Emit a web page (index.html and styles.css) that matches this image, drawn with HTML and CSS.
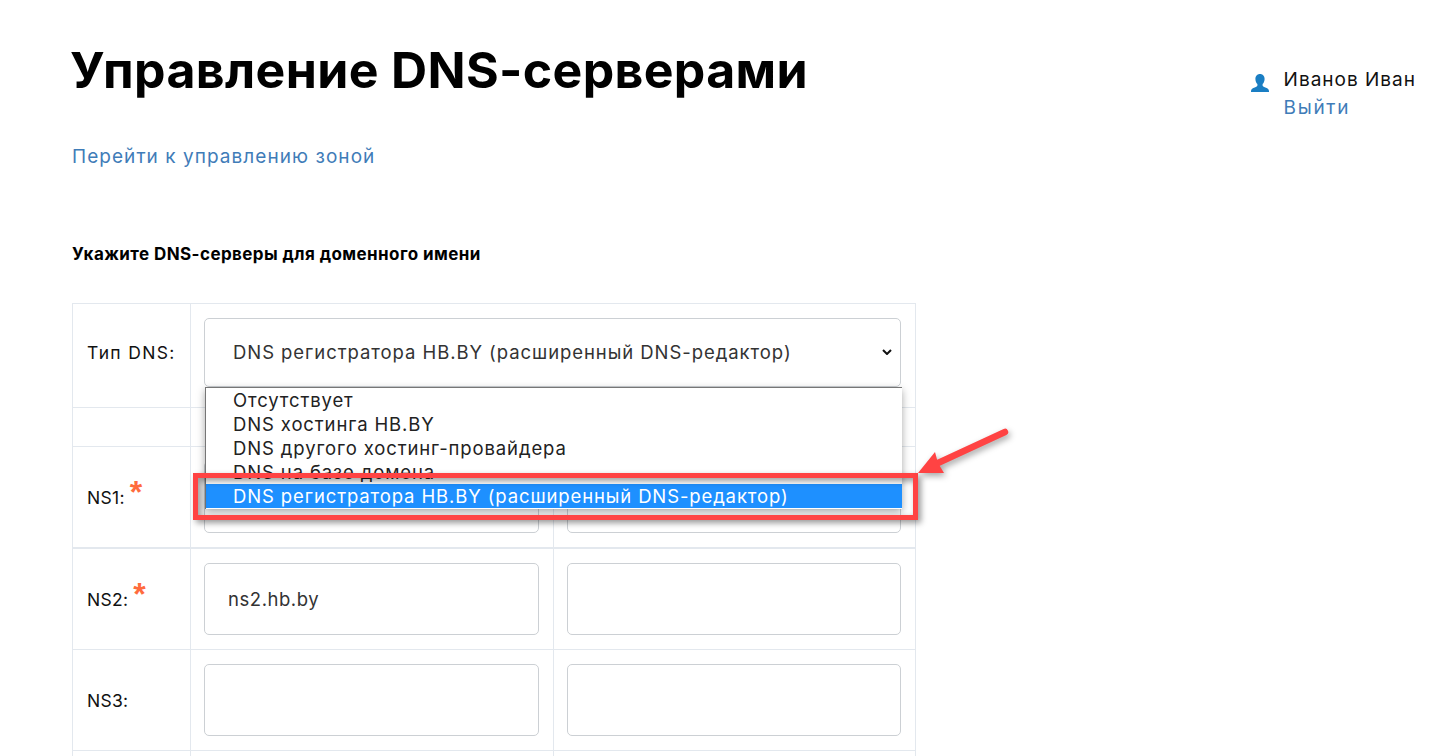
FILE: index.html
```html
<!DOCTYPE html>
<html lang="ru">
<head>
<meta charset="utf-8">
<title>Управление DNS-серверами</title>
<link rel="stylesheet" href="styles.css">
</head>
<body>
<div class="page">
  <header class="top">
    <div class="top-main">
      <h1 class="title">Управление DNS-серверами</h1>
      <a class="link zone-link" href="#">Перейти к управлению зоной</a>
    </div>
    <div class="user">
      <svg class="user-icon" viewBox="0 0 20 20" aria-hidden="true"><path d="M10 1c2.900 0 4.600 2.200 4.600 5 0 2.200-.9 4-2 5.100v1.500c0 .8 1 1.300 2.700 2 1.900.8 3.700 1.500 3.700 3.400v1H1v-1c0-1.900 1.800-2.600 3.700-3.400 1.700-.7 2.700-1.200 2.700-2v-1.500c-1.100-1.100-2-2.900-2-5.100C5.400 3.200 7.100 1 10 1z"/></svg>
      <div class="user-text">
        <div class="user-name">Иванов Иван</div>
        <a class="link logout" href="#">Выйти</a>
      </div>
    </div>
  </header>

  <h2 class="section">Укажите DNS-серверы для доменного имени</h2>

  <div class="form-wrap">
    <table class="dns">
      <colgroup><col class="c1"><col class="c2"><col class="c3"></colgroup>
      <tr class="row-type">
        <td class="lbl lbl-type">Тип DNS:</td>
        <td colspan="2">
          <select class="field select">
            <option>DNS регистратора HB.BY (расширенный DNS-редактор)</option>
          </select>
        </td>
      </tr>
      <tr class="row-gap"><td></td><td colspan="2"></td></tr>
      <tr class="row-ns thick">
        <td class="lbl">NS1:<span class="req">*</span></td>
        <td><input class="field" value="ns1.hb.by"></td>
        <td><input class="field"></td>
      </tr>
      <tr class="row-ns after-thick">
        <td class="lbl">NS2:<span class="req">*</span></td>
        <td><input class="field" value="ns2.hb.by"></td>
        <td><input class="field"></td>
      </tr>
      <tr class="row-ns">
        <td class="lbl">NS3:</td>
        <td><input class="field"></td>
        <td><input class="field"></td>
      </tr>
      <tr class="row-ns">
        <td class="lbl"></td>
        <td></td>
        <td></td>
      </tr>
    </table>

    <ul class="dropdown">
      <li>Отсутствует</li>
      <li>DNS хостинга HB.BY</li>
      <li>DNS другого хостинг-провайдера</li>
      <li>DNS на базе домена</li>
      <li class="selected">DNS регистратора HB.BY (расширенный DNS-редактор)</li>
    </ul>

    <div class="frame"></div>
    <svg class="arrow" viewBox="0 0 110 60" aria-hidden="true">
      <path class="arrow-line" d="M89 5 L22 36"/>
      <path class="arrow-head" d="M2 46 L19 25 L22 36 L28 46 Z"/>
    </svg>
  </div>
</div>
</body>
</html>
```
FILE: styles.css
```css
* { box-sizing: border-box; }
html, body { margin: 0; height: 756px; overflow: hidden; background: #fff; }
body { font-family: Inter, "Open Sans", "DejaVu Sans", sans-serif; color: #000; }
.page { padding: 40px 32px 0 72px; }

.top { display: flex; justify-content: space-between; align-items: flex-start; }
.title { margin: 0 0 0 -2px; font-size: 50px; line-height: 60px; font-weight: 700; letter-spacing: .35px; }
.link { color: #3f7cb8; text-decoration: none; font-size: 19px; letter-spacing: 1.05px; }
.zone-link { display: block; margin-top: 44px; line-height: 26px; }
.logout { letter-spacing: 1.7px; }

.user { display: flex; align-items: flex-start; gap: 14px; margin-top: 26px; }
.user-icon { width: 20px; height: 20px; margin-top: 7px; fill: #1a7ec3; }
.user-text { line-height: 28px; font-size: 19px; letter-spacing: 1px; }
.user-name { color: #111; }

.section { margin: 74px 0 0; font-size: 17px; line-height: 20px; font-weight: 700; letter-spacing: .42px; }

.form-wrap { position: relative; margin-top: 39px; width: 843px; }
.dns { border-collapse: collapse; table-layout: fixed; width: 843px; }
.c1 { width: 118px; }
.c2 { width: 363px; }
.c3 { width: 362px; }
.dns td { border: 1px solid #e3e8ee; padding: 14px 14px 14px 13px; vertical-align: middle; }
.lbl { font-size: 17.500px; letter-spacing: .3px; color: #111; padding-left: 14px !important; }
.lbl-type { letter-spacing: 1.35px; }
.row-type td { height: 104px; padding-bottom: 20px; padding-top: 13px; }
.row-gap td { height: 39px; padding: 0; }
.row-ns td { height: 100px; }
.thick td { border-bottom-width: 2px; }
.req { color: #ff6b3d; font-size: 32px; line-height: 0; font-weight: 700; font-family: "Liberation Sans", sans-serif; position: relative; top: -1px; margin-left: 5px; }

.field { display: block; width: 100%; height: 72px; padding: 0 23px; border: 1px solid #ccd0d4; border-radius: 5px; background: #fff; font: 18.500px Inter, "Open Sans", sans-serif; letter-spacing: .55px; color: #333; outline: 0; }
.select { height: 69px; padding-left: 28px; letter-spacing: .93px; appearance: none; background: #fff url("data:image/svg+xml,%3Csvg xmlns='http://www.w3.org/2000/svg' width='10' height='6'%3E%3Cpath d='M1 1l4 4 4-4' fill='none' stroke='%23111' stroke-width='2'/%3E%3C/svg%3E") no-repeat right 8px center; }

.dropdown { position: absolute; left: 133px; top: 84px; width: 697px; height: 122px; margin: 0; padding: 0; list-style: none; background: #fff; border: 1px solid #767676; border-width: 1px 0 0 1px; box-shadow: 0 3px 8px rgba(0,0,0,.35); font-size: 18.500px; letter-spacing: .87px; color: #222; }
.dropdown li { height: 24px; line-height: 24px; padding-left: 27px; white-space: nowrap; }
.dropdown .selected { background: #1e90ff; color: #fff; }

.frame { position: absolute; left: 121px; top: 170px; width: 725px; height: 47px; border: 5px solid #ff4343; box-shadow: 3px 3px 6px rgba(0,0,0,.4), inset 3px 3px 6px rgba(0,0,0,.4); }
.arrow { position: absolute; left: 844px; top: 124px; width: 110px; height: 60px; overflow: visible; filter: drop-shadow(2px 3px 3px rgba(0,0,0,.35)); }
.arrow-line { fill: none; stroke: #ff4343; stroke-width: 6.500; stroke-linecap: round; }
.arrow-head { fill: #ff4343; }
```
